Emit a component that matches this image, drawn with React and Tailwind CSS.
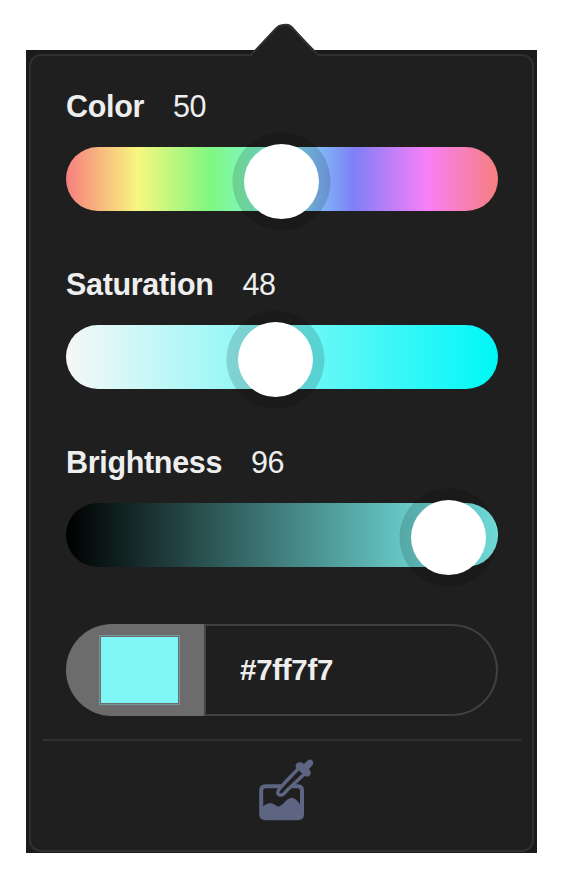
import React from "react";

function Slider({ label, value, track, thumb, labelWidth }) {
  return (
    <div className="h-[178px]">
      <div className="flex h-[34px] items-center text-[30.5px] leading-[34px]">
        <span className={`font-bold tracking-[-0.32px] ${labelWidth}`}>{label}</span>
        <span className="tracking-[-0.4px]">{value}</span>
      </div>
      <div className={`relative mt-[23.5px] h-16 rounded-full ${track}`}>
        <div
          className="absolute -top-[3px] size-[75px] rounded-full bg-white shadow-[0_0_0_11.5px_rgba(0,0,0,0.15)]"
          style={{ left: thumb }}
        />
      </div>
    </div>
  );
}

function ImagePickerIcon() {
  return (
    <svg className="h-[64px] w-[60px]" viewBox="257 758 60 64" fill="none">
      <path
        d="M281.5 786.3H265.5Q261.2 786.3 261.2 790.5V814Q261.2 818.2 265.5 818.2H297.8Q302 818.2 302 814V790.5Q302 786.3 297.8 786.3H292"
        stroke="#5e6582"
        strokeWidth="4"
      />
      <path
        d="M261 808C265 804.5 268 802.8 271.5 803.3C275 804 276.5 807.3 279.5 806.3C283 805 287 798 291.5 797.7C296 797.7 299 803 302 807V815Q302 818 298 818H265Q261 818 261 814Z"
        fill="#5e6582"
      />
      <path
        d="M298.5 768.5L285 782.5C283 785.5 278 789 277.8 792.3C277.6 794.5 280 795.5 282.2 794.8C285.5 793.8 286 790 289.2 788.2L306 772.5"
        fill="#1f1f1f"
        stroke="#5e6582"
        strokeWidth="3.4"
        strokeLinecap="round"
        strokeLinejoin="round"
      />
      <path
        d="M296.6 763.5C298.6 761.6 301.3 761.9 303 763.3L304 764L307.3 760.8C309 759.2 311.3 759.2 312.5 760.8C313.8 762.4 313.4 764.2 312 765.8L309 769L309.9 770.3C311.3 772 311 774.5 309.2 775.9C307.4 777.2 305.2 776.6 303.9 775.2L296.7 768.2C295.2 766.6 295.2 764.8 296.6 763.5Z"
        fill="#5e6582"
      />
    </svg>
  );
}

export default function App() {
  return (
    <div className="h-[890px] w-[571px] bg-white pl-[26px] pt-[50px] font-['Liberation_Sans',Arial,sans-serif] text-[#eeeeee]">
      <div className="relative h-[803px] w-[511px] bg-[#1b1b1b] px-[3px] pt-[4px]">
        <div className="flex h-[798px] flex-col rounded-[12px] border-2 border-[#303030] bg-[#1f1f1f] pl-[12px] pr-[11px] pt-[33px]">
          <div className="w-[478px] px-[23px]">
            <Slider
              label="Color"
              value="50"
              labelWidth="w-[107px]"
              track="bg-[linear-gradient(90deg,#f77f7f_0%,#f7f77f_16.67%,#7ff77f_33.33%,#7ff7f7_50%,#7f7ff7_66.67%,#f77ff7_83.33%,#f77f7f_100%)]"
              thumb="178px"
            />
            <Slider
              label="Saturation"
              value="48"
              labelWidth="w-[176.5px]"
              track="bg-[linear-gradient(90deg,#f7f7f7,#00f7f7)]"
              thumb="172.4px"
            />
            <Slider
              label="Brightness"
              value="96"
              labelWidth="w-[185px]"
              track="bg-[linear-gradient(90deg,#000000,#82fffc)]"
              thumb="345px"
            />
            <div className="flex h-[93px] pt-px">
              <div className="flex w-[140px] shrink-0 items-center rounded-l-full border-r-2 border-[#454545] bg-[#6c6c6c] pl-[33px]">
                <div className="h-[70px] w-[81px] border border-[#719999] p-px">
                  <div className="h-full w-full bg-[#7ff7f7]" />
                </div>
              </div>
              <div className="flex grow items-center rounded-r-full border-y-2 border-r-2 border-[#404040] pl-[34px] text-[29.5px] font-bold leading-[34px] tracking-[-0.28px]">
                #7ff7f7
              </div>
            </div>
          </div>
          <div className="mt-[22.5px] h-[2px] w-[478px] shrink-0 bg-[#303030]" />
          <div className="mt-[17.5px] flex justify-center pl-[10px]">
            <ImagePickerIcon />
          </div>
        </div>
        <svg className="absolute -top-[27px] left-[225px] h-[34px] w-[68px]" viewBox="251 23 68 34">
          <path d="M252 55L277 27Q279.5 25 283 24.5L287 24Q290 24 292.5 26.5L317.5 55V57H252Z" fill="#1f1f1f" />
          <path d="M251.5 54.5L276 28.5Q279 25.3 283 25L286.5 24.8Q289.3 25 291.5 27.5L317.5 54.5" fill="none" stroke="#303030" strokeWidth="2" />
        </svg>
      </div>
    </div>
  );
}
